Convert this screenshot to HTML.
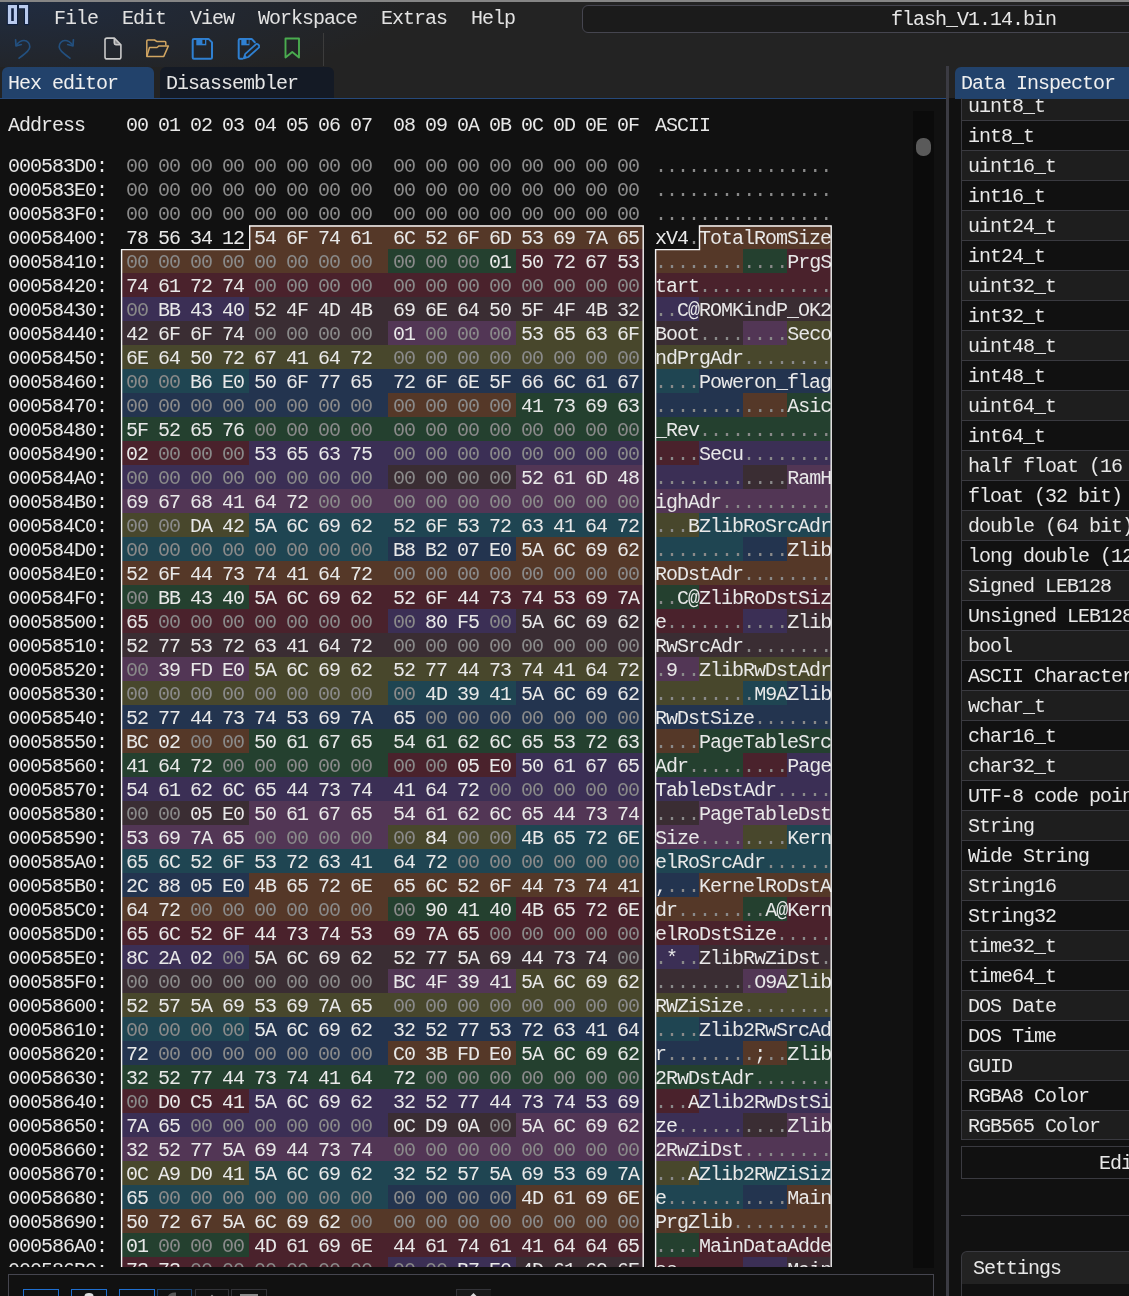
<!DOCTYPE html><html><head><meta charset="utf-8"><style>
*{margin:0;padding:0;box-sizing:border-box}
html,body{width:1129px;height:1296px;overflow:hidden;background:#111111}
body{position:relative;font-family:"Liberation Mono",monospace;font-size:20px;letter-spacing:-1px;color:#e8e8e8}
.a{position:absolute}
.t{position:absolute;white-space:pre;line-height:24px}
.r{position:absolute;left:0;height:24px;width:935px}
.bg{position:absolute;top:0;height:24px}
.h{position:absolute;top:2px;width:32px;text-align:center;line-height:24px;white-space:pre}
.z{color:#8a8a8a}
.as{position:absolute;top:2px;left:655px;white-space:pre;line-height:24px}
.d{color:#8a8a8a}
.di{position:absolute;left:961px;width:200px;height:30px;border-top:1px solid #3a3a40}
.dt{position:absolute;left:968px;white-space:pre;line-height:30px;margin-top:2px}

</style></head><body><div id="root" style="position:absolute;left:0;top:0;width:1129px;height:1296px;will-change:transform">
<div class="a" style="left:0;top:0;width:1129px;height:67px;background:#232323"></div>
<div class="a" style="left:0;top:0;width:700px;height:67px;background:radial-gradient(ellipse 420px 90px at 0px 0px, rgba(30,52,90,0.55), rgba(30,52,90,0) 100%)"></div>
<div class="a" style="left:0;top:0;width:1129px;height:2px;background:#858585"></div>
<svg class="a" style="left:4px;top:2px" width="30" height="26" viewBox="0 0 30 26"><g fill="#0f1f3e"><rect x="2.9" y="1.9" width="11.1" height="21.2"/><rect x="14" y="1.9" width="11.1" height="5.35"/><rect x="20" y="1.9" width="5.1" height="21.2"/></g><path d="M3.9 2.9h9.1v19.2h-9.1z M7.2 6.25v12.65h2.6v-12.65z" fill="#b9caed" fill-rule="evenodd"/><path d="M15 2.9h9.1v19.2h-3.1v-15.85h-6z" fill="#b9caed"/></svg>
<div class="t" style="left:54px;top:7px;color:#e2e2e2">File</div>
<div class="t" style="left:122px;top:7px;color:#e2e2e2">Edit</div>
<div class="t" style="left:190px;top:7px;color:#e2e2e2">View</div>
<div class="t" style="left:258px;top:7px;color:#e2e2e2">Workspace</div>
<div class="t" style="left:381px;top:7px;color:#e2e2e2">Extras</div>
<div class="t" style="left:471px;top:7px;color:#e2e2e2">Help</div>
<div class="a" style="left:582px;top:5px;width:600px;height:28px;border:1px solid #45454f;border-radius:6px;background:#1b1b1b"></div>
<div class="t" style="left:891px;top:8px;color:#e6e6e6">flash_V1.14.bin</div>
<svg class="a" style="left:0;top:32px" width="330" height="34" viewBox="0 0 330 34"><g fill="none" stroke="#23507f" stroke-width="1.7" stroke-linecap="round" stroke-linejoin="round"><path d="M16.5 13 C19 9.5 22 8.5 24 8.5 C27.5 8.5 30 11.5 29.8 15 C29.6 18 27 20 19.1 26.2"/><path d="M15.6 7.8 L16 13.9 L21.3 12.5"/><path d="M72.5 13 C70 9.5 67 8.5 65 8.5 C61.5 8.5 59 11.5 59.2 15 C59.4 18 62 20 69.9 26.2"/><path d="M73.4 7.8 L73 13.9 L67.7 12.5"/></g><g fill="none" stroke="#c9c9c9" stroke-width="1.6" stroke-linejoin="round"><path d="M107 6.1 H114.3 L120.9 12.7 V24.9 Q120.9 26.9 118.9 26.9 H107 Q105 26.9 105 24.9 V8.1 Q105 6.1 107 6.1 Z"/><path d="M114.3 6.1 V11.1 Q114.3 12.7 115.9 12.7 H120.9"/></g><path d="M115 7 L120 12 H115z" fill="#cfcfcf" opacity="0.6"/><g fill="none" stroke="#d2a662" stroke-width="1.5" stroke-linejoin="round"><path d="M146.8 24.6 V9 Q146.8 8 147.8 8 H154.5 L157.1 9.6 H164.8 Q165.8 9.6 165.8 10.6 V13.5"/><path d="M146.8 24.6 L149.5 15.5 H157 L159 13.9 H168.4 L163.8 24.4 Z"/></g><path d="M194 6.9 H208.5 L212 10.4 V25.5 Q212 26.8 210.7 26.8 H194 Q192.7 26.8 192.7 25.5 V8.2 Q192.7 6.9 194 6.9 Z" fill="none" stroke="#2f80d2" stroke-width="2" stroke-linejoin="round"/><rect x="196.3" y="7" width="10" height="6.3" fill="#2f80d2"/><rect x="202.4" y="7.9" width="2.6" height="3.9" fill="#232323"/><path d="M242.4 26.8 H240 Q238.7 26.8 238.7 25.5 V8.2 Q238.7 6.9 240 6.9 H251.6 L254.8 10.2" fill="none" stroke="#2f80d2" stroke-width="2" stroke-linejoin="round" stroke-linecap="round"/><rect x="241.3" y="7" width="8.2" height="6.3" fill="#2f80d2"/><rect x="246.6" y="7.9" width="2.1" height="3.9" fill="#232323"/><path d="M243.8 26.3 L248.3 25 L259.1 15.3 Q259.6 13.3 258 12.4 Q257 11.6 256.1 12.1 L245.3 21.8 Z" fill="none" stroke="#2f80d2" stroke-width="1.8" stroke-linejoin="round"/><path d="M243.8 26.3 L247 25.3 L245.2 23z" fill="#2f80d2"/><path d="M285.5 6.5h13.5v19l-6.75-5.5-6.75 5.5z" fill="none" stroke="#4aac4f" stroke-width="1.9" stroke-linejoin="round"/><rect x="323" y="1" width="1" height="33" fill="#3c3c3c"/></svg>
<div class="a" style="left:0;top:67px;width:946px;height:31px;background:#232323"></div>
<div class="a" style="left:2px;top:67px;width:152px;height:31px;background:#22426b;border-radius:6px 6px 0 0"></div>
<div class="a" style="left:160px;top:67px;width:174px;height:31px;background:#141a25;border-radius:6px 6px 0 0"></div>
<div class="a" style="left:0;top:98px;width:946px;height:1px;background:#26497a"></div>
<div class="t" style="left:8px;top:72px;color:#f0f0f0">Hex editor</div>
<div class="t" style="left:166px;top:72px;color:#e6e6e6">Disassembler</div>
<div class="t" style="left:8px;top:114px">Address</div>
<div class="h" style="left:121px;top:114px">00</div>
<div class="h" style="left:153px;top:114px">01</div>
<div class="h" style="left:185px;top:114px">02</div>
<div class="h" style="left:217px;top:114px">03</div>
<div class="h" style="left:249px;top:114px">04</div>
<div class="h" style="left:281px;top:114px">05</div>
<div class="h" style="left:313px;top:114px">06</div>
<div class="h" style="left:345px;top:114px">07</div>
<div class="h" style="left:388px;top:114px">08</div>
<div class="h" style="left:420px;top:114px">09</div>
<div class="h" style="left:452px;top:114px">0A</div>
<div class="h" style="left:484px;top:114px">0B</div>
<div class="h" style="left:516px;top:114px">0C</div>
<div class="h" style="left:548px;top:114px">0D</div>
<div class="h" style="left:580px;top:114px">0E</div>
<div class="h" style="left:612px;top:114px">0F</div>
<div class="t" style="left:655px;top:114px">ASCII</div>
<div class="a" style="left:0;top:153px;width:935px;height:1114px;overflow:hidden">
<div class="r" style="top:0px">
<div class="t" style="left:8px;top:2px">000583D0:</div>
<div class="h z" style="left:121px">00</div>
<div class="h z" style="left:153px">00</div>
<div class="h z" style="left:185px">00</div>
<div class="h z" style="left:217px">00</div>
<div class="h z" style="left:249px">00</div>
<div class="h z" style="left:281px">00</div>
<div class="h z" style="left:313px">00</div>
<div class="h z" style="left:345px">00</div>
<div class="h z" style="left:388px">00</div>
<div class="h z" style="left:420px">00</div>
<div class="h z" style="left:452px">00</div>
<div class="h z" style="left:484px">00</div>
<div class="h z" style="left:516px">00</div>
<div class="h z" style="left:548px">00</div>
<div class="h z" style="left:580px">00</div>
<div class="h z" style="left:612px">00</div>
<div class="as"><span class="d">.</span><span class="d">.</span><span class="d">.</span><span class="d">.</span><span class="d">.</span><span class="d">.</span><span class="d">.</span><span class="d">.</span><span class="d">.</span><span class="d">.</span><span class="d">.</span><span class="d">.</span><span class="d">.</span><span class="d">.</span><span class="d">.</span><span class="d">.</span></div>
</div>
<div class="r" style="top:24px">
<div class="t" style="left:8px;top:2px">000583E0:</div>
<div class="h z" style="left:121px">00</div>
<div class="h z" style="left:153px">00</div>
<div class="h z" style="left:185px">00</div>
<div class="h z" style="left:217px">00</div>
<div class="h z" style="left:249px">00</div>
<div class="h z" style="left:281px">00</div>
<div class="h z" style="left:313px">00</div>
<div class="h z" style="left:345px">00</div>
<div class="h z" style="left:388px">00</div>
<div class="h z" style="left:420px">00</div>
<div class="h z" style="left:452px">00</div>
<div class="h z" style="left:484px">00</div>
<div class="h z" style="left:516px">00</div>
<div class="h z" style="left:548px">00</div>
<div class="h z" style="left:580px">00</div>
<div class="h z" style="left:612px">00</div>
<div class="as"><span class="d">.</span><span class="d">.</span><span class="d">.</span><span class="d">.</span><span class="d">.</span><span class="d">.</span><span class="d">.</span><span class="d">.</span><span class="d">.</span><span class="d">.</span><span class="d">.</span><span class="d">.</span><span class="d">.</span><span class="d">.</span><span class="d">.</span><span class="d">.</span></div>
</div>
<div class="r" style="top:48px">
<div class="t" style="left:8px;top:2px">000583F0:</div>
<div class="h z" style="left:121px">00</div>
<div class="h z" style="left:153px">00</div>
<div class="h z" style="left:185px">00</div>
<div class="h z" style="left:217px">00</div>
<div class="h z" style="left:249px">00</div>
<div class="h z" style="left:281px">00</div>
<div class="h z" style="left:313px">00</div>
<div class="h z" style="left:345px">00</div>
<div class="h z" style="left:388px">00</div>
<div class="h z" style="left:420px">00</div>
<div class="h z" style="left:452px">00</div>
<div class="h z" style="left:484px">00</div>
<div class="h z" style="left:516px">00</div>
<div class="h z" style="left:548px">00</div>
<div class="h z" style="left:580px">00</div>
<div class="h z" style="left:612px">00</div>
<div class="as"><span class="d">.</span><span class="d">.</span><span class="d">.</span><span class="d">.</span><span class="d">.</span><span class="d">.</span><span class="d">.</span><span class="d">.</span><span class="d">.</span><span class="d">.</span><span class="d">.</span><span class="d">.</span><span class="d">.</span><span class="d">.</span><span class="d">.</span><span class="d">.</span></div>
</div>
<div class="r" style="top:72px">
<div class="t" style="left:8px;top:2px">00058400:</div>
<div class="bg" style="left:249px;width:395px;background:#553828"></div>
<div class="bg" style="left:699px;width:132px;background:#553828"></div>
<div class="h" style="left:121px">78</div>
<div class="h" style="left:153px">56</div>
<div class="h" style="left:185px">34</div>
<div class="h" style="left:217px">12</div>
<div class="h" style="left:249px">54</div>
<div class="h" style="left:281px">6F</div>
<div class="h" style="left:313px">74</div>
<div class="h" style="left:345px">61</div>
<div class="h" style="left:388px">6C</div>
<div class="h" style="left:420px">52</div>
<div class="h" style="left:452px">6F</div>
<div class="h" style="left:484px">6D</div>
<div class="h" style="left:516px">53</div>
<div class="h" style="left:548px">69</div>
<div class="h" style="left:580px">7A</div>
<div class="h" style="left:612px">65</div>
<div class="as">xV4<span class="d">.</span>TotalRomSize</div>
</div>
<div class="r" style="top:96px">
<div class="t" style="left:8px;top:2px">00058410:</div>
<div class="bg" style="left:121px;width:267px;background:#553828"></div>
<div class="bg" style="left:388px;width:128px;background:#24402f"></div>
<div class="bg" style="left:516px;width:128px;background:#4a222c"></div>
<div class="bg" style="left:655px;width:88px;background:#553828"></div>
<div class="bg" style="left:743px;width:44px;background:#24402f"></div>
<div class="bg" style="left:787px;width:44px;background:#4a222c"></div>
<div class="h z" style="left:121px">00</div>
<div class="h z" style="left:153px">00</div>
<div class="h z" style="left:185px">00</div>
<div class="h z" style="left:217px">00</div>
<div class="h z" style="left:249px">00</div>
<div class="h z" style="left:281px">00</div>
<div class="h z" style="left:313px">00</div>
<div class="h z" style="left:345px">00</div>
<div class="h z" style="left:388px">00</div>
<div class="h z" style="left:420px">00</div>
<div class="h z" style="left:452px">00</div>
<div class="h" style="left:484px">01</div>
<div class="h" style="left:516px">50</div>
<div class="h" style="left:548px">72</div>
<div class="h" style="left:580px">67</div>
<div class="h" style="left:612px">53</div>
<div class="as"><span class="d">.</span><span class="d">.</span><span class="d">.</span><span class="d">.</span><span class="d">.</span><span class="d">.</span><span class="d">.</span><span class="d">.</span><span class="d">.</span><span class="d">.</span><span class="d">.</span><span class="d">.</span>PrgS</div>
</div>
<div class="r" style="top:120px">
<div class="t" style="left:8px;top:2px">00058420:</div>
<div class="bg" style="left:121px;width:523px;background:#4a222c"></div>
<div class="bg" style="left:655px;width:176px;background:#4a222c"></div>
<div class="h" style="left:121px">74</div>
<div class="h" style="left:153px">61</div>
<div class="h" style="left:185px">72</div>
<div class="h" style="left:217px">74</div>
<div class="h z" style="left:249px">00</div>
<div class="h z" style="left:281px">00</div>
<div class="h z" style="left:313px">00</div>
<div class="h z" style="left:345px">00</div>
<div class="h z" style="left:388px">00</div>
<div class="h z" style="left:420px">00</div>
<div class="h z" style="left:452px">00</div>
<div class="h z" style="left:484px">00</div>
<div class="h z" style="left:516px">00</div>
<div class="h z" style="left:548px">00</div>
<div class="h z" style="left:580px">00</div>
<div class="h z" style="left:612px">00</div>
<div class="as">tart<span class="d">.</span><span class="d">.</span><span class="d">.</span><span class="d">.</span><span class="d">.</span><span class="d">.</span><span class="d">.</span><span class="d">.</span><span class="d">.</span><span class="d">.</span><span class="d">.</span><span class="d">.</span></div>
</div>
<div class="r" style="top:144px">
<div class="t" style="left:8px;top:2px">00058430:</div>
<div class="bg" style="left:121px;width:128px;background:#3b2f55"></div>
<div class="bg" style="left:249px;width:395px;background:#3a2d33"></div>
<div class="bg" style="left:655px;width:44px;background:#3b2f55"></div>
<div class="bg" style="left:699px;width:132px;background:#3a2d33"></div>
<div class="h z" style="left:121px">00</div>
<div class="h" style="left:153px">BB</div>
<div class="h" style="left:185px">43</div>
<div class="h" style="left:217px">40</div>
<div class="h" style="left:249px">52</div>
<div class="h" style="left:281px">4F</div>
<div class="h" style="left:313px">4D</div>
<div class="h" style="left:345px">4B</div>
<div class="h" style="left:388px">69</div>
<div class="h" style="left:420px">6E</div>
<div class="h" style="left:452px">64</div>
<div class="h" style="left:484px">50</div>
<div class="h" style="left:516px">5F</div>
<div class="h" style="left:548px">4F</div>
<div class="h" style="left:580px">4B</div>
<div class="h" style="left:612px">32</div>
<div class="as"><span class="d">.</span><span class="d">.</span>C@ROMKindP_OK2</div>
</div>
<div class="r" style="top:168px">
<div class="t" style="left:8px;top:2px">00058440:</div>
<div class="bg" style="left:121px;width:267px;background:#3a2d33"></div>
<div class="bg" style="left:388px;width:128px;background:#523655"></div>
<div class="bg" style="left:516px;width:128px;background:#48472c"></div>
<div class="bg" style="left:655px;width:88px;background:#3a2d33"></div>
<div class="bg" style="left:743px;width:44px;background:#523655"></div>
<div class="bg" style="left:787px;width:44px;background:#48472c"></div>
<div class="h" style="left:121px">42</div>
<div class="h" style="left:153px">6F</div>
<div class="h" style="left:185px">6F</div>
<div class="h" style="left:217px">74</div>
<div class="h z" style="left:249px">00</div>
<div class="h z" style="left:281px">00</div>
<div class="h z" style="left:313px">00</div>
<div class="h z" style="left:345px">00</div>
<div class="h" style="left:388px">01</div>
<div class="h z" style="left:420px">00</div>
<div class="h z" style="left:452px">00</div>
<div class="h z" style="left:484px">00</div>
<div class="h" style="left:516px">53</div>
<div class="h" style="left:548px">65</div>
<div class="h" style="left:580px">63</div>
<div class="h" style="left:612px">6F</div>
<div class="as">Boot<span class="d">.</span><span class="d">.</span><span class="d">.</span><span class="d">.</span><span class="d">.</span><span class="d">.</span><span class="d">.</span><span class="d">.</span>Seco</div>
</div>
<div class="r" style="top:192px">
<div class="t" style="left:8px;top:2px">00058450:</div>
<div class="bg" style="left:121px;width:523px;background:#48472c"></div>
<div class="bg" style="left:655px;width:176px;background:#48472c"></div>
<div class="h" style="left:121px">6E</div>
<div class="h" style="left:153px">64</div>
<div class="h" style="left:185px">50</div>
<div class="h" style="left:217px">72</div>
<div class="h" style="left:249px">67</div>
<div class="h" style="left:281px">41</div>
<div class="h" style="left:313px">64</div>
<div class="h" style="left:345px">72</div>
<div class="h z" style="left:388px">00</div>
<div class="h z" style="left:420px">00</div>
<div class="h z" style="left:452px">00</div>
<div class="h z" style="left:484px">00</div>
<div class="h z" style="left:516px">00</div>
<div class="h z" style="left:548px">00</div>
<div class="h z" style="left:580px">00</div>
<div class="h z" style="left:612px">00</div>
<div class="as">ndPrgAdr<span class="d">.</span><span class="d">.</span><span class="d">.</span><span class="d">.</span><span class="d">.</span><span class="d">.</span><span class="d">.</span><span class="d">.</span></div>
</div>
<div class="r" style="top:216px">
<div class="t" style="left:8px;top:2px">00058460:</div>
<div class="bg" style="left:121px;width:128px;background:#1f4552"></div>
<div class="bg" style="left:249px;width:395px;background:#23344f"></div>
<div class="bg" style="left:655px;width:44px;background:#1f4552"></div>
<div class="bg" style="left:699px;width:132px;background:#23344f"></div>
<div class="h z" style="left:121px">00</div>
<div class="h z" style="left:153px">00</div>
<div class="h" style="left:185px">B6</div>
<div class="h" style="left:217px">E0</div>
<div class="h" style="left:249px">50</div>
<div class="h" style="left:281px">6F</div>
<div class="h" style="left:313px">77</div>
<div class="h" style="left:345px">65</div>
<div class="h" style="left:388px">72</div>
<div class="h" style="left:420px">6F</div>
<div class="h" style="left:452px">6E</div>
<div class="h" style="left:484px">5F</div>
<div class="h" style="left:516px">66</div>
<div class="h" style="left:548px">6C</div>
<div class="h" style="left:580px">61</div>
<div class="h" style="left:612px">67</div>
<div class="as"><span class="d">.</span><span class="d">.</span><span class="d">.</span><span class="d">.</span>Poweron_flag</div>
</div>
<div class="r" style="top:240px">
<div class="t" style="left:8px;top:2px">00058470:</div>
<div class="bg" style="left:121px;width:267px;background:#23344f"></div>
<div class="bg" style="left:388px;width:128px;background:#553828"></div>
<div class="bg" style="left:516px;width:128px;background:#24402f"></div>
<div class="bg" style="left:655px;width:88px;background:#23344f"></div>
<div class="bg" style="left:743px;width:44px;background:#553828"></div>
<div class="bg" style="left:787px;width:44px;background:#24402f"></div>
<div class="h z" style="left:121px">00</div>
<div class="h z" style="left:153px">00</div>
<div class="h z" style="left:185px">00</div>
<div class="h z" style="left:217px">00</div>
<div class="h z" style="left:249px">00</div>
<div class="h z" style="left:281px">00</div>
<div class="h z" style="left:313px">00</div>
<div class="h z" style="left:345px">00</div>
<div class="h z" style="left:388px">00</div>
<div class="h z" style="left:420px">00</div>
<div class="h z" style="left:452px">00</div>
<div class="h z" style="left:484px">00</div>
<div class="h" style="left:516px">41</div>
<div class="h" style="left:548px">73</div>
<div class="h" style="left:580px">69</div>
<div class="h" style="left:612px">63</div>
<div class="as"><span class="d">.</span><span class="d">.</span><span class="d">.</span><span class="d">.</span><span class="d">.</span><span class="d">.</span><span class="d">.</span><span class="d">.</span><span class="d">.</span><span class="d">.</span><span class="d">.</span><span class="d">.</span>Asic</div>
</div>
<div class="r" style="top:264px">
<div class="t" style="left:8px;top:2px">00058480:</div>
<div class="bg" style="left:121px;width:523px;background:#24402f"></div>
<div class="bg" style="left:655px;width:176px;background:#24402f"></div>
<div class="h" style="left:121px">5F</div>
<div class="h" style="left:153px">52</div>
<div class="h" style="left:185px">65</div>
<div class="h" style="left:217px">76</div>
<div class="h z" style="left:249px">00</div>
<div class="h z" style="left:281px">00</div>
<div class="h z" style="left:313px">00</div>
<div class="h z" style="left:345px">00</div>
<div class="h z" style="left:388px">00</div>
<div class="h z" style="left:420px">00</div>
<div class="h z" style="left:452px">00</div>
<div class="h z" style="left:484px">00</div>
<div class="h z" style="left:516px">00</div>
<div class="h z" style="left:548px">00</div>
<div class="h z" style="left:580px">00</div>
<div class="h z" style="left:612px">00</div>
<div class="as">_Rev<span class="d">.</span><span class="d">.</span><span class="d">.</span><span class="d">.</span><span class="d">.</span><span class="d">.</span><span class="d">.</span><span class="d">.</span><span class="d">.</span><span class="d">.</span><span class="d">.</span><span class="d">.</span></div>
</div>
<div class="r" style="top:288px">
<div class="t" style="left:8px;top:2px">00058490:</div>
<div class="bg" style="left:121px;width:128px;background:#4a222c"></div>
<div class="bg" style="left:249px;width:395px;background:#3b2f55"></div>
<div class="bg" style="left:655px;width:44px;background:#4a222c"></div>
<div class="bg" style="left:699px;width:132px;background:#3b2f55"></div>
<div class="h" style="left:121px">02</div>
<div class="h z" style="left:153px">00</div>
<div class="h z" style="left:185px">00</div>
<div class="h z" style="left:217px">00</div>
<div class="h" style="left:249px">53</div>
<div class="h" style="left:281px">65</div>
<div class="h" style="left:313px">63</div>
<div class="h" style="left:345px">75</div>
<div class="h z" style="left:388px">00</div>
<div class="h z" style="left:420px">00</div>
<div class="h z" style="left:452px">00</div>
<div class="h z" style="left:484px">00</div>
<div class="h z" style="left:516px">00</div>
<div class="h z" style="left:548px">00</div>
<div class="h z" style="left:580px">00</div>
<div class="h z" style="left:612px">00</div>
<div class="as"><span class="d">.</span><span class="d">.</span><span class="d">.</span><span class="d">.</span>Secu<span class="d">.</span><span class="d">.</span><span class="d">.</span><span class="d">.</span><span class="d">.</span><span class="d">.</span><span class="d">.</span><span class="d">.</span></div>
</div>
<div class="r" style="top:312px">
<div class="t" style="left:8px;top:2px">000584A0:</div>
<div class="bg" style="left:121px;width:267px;background:#3b2f55"></div>
<div class="bg" style="left:388px;width:128px;background:#3a2d33"></div>
<div class="bg" style="left:516px;width:128px;background:#523655"></div>
<div class="bg" style="left:655px;width:88px;background:#3b2f55"></div>
<div class="bg" style="left:743px;width:44px;background:#3a2d33"></div>
<div class="bg" style="left:787px;width:44px;background:#523655"></div>
<div class="h z" style="left:121px">00</div>
<div class="h z" style="left:153px">00</div>
<div class="h z" style="left:185px">00</div>
<div class="h z" style="left:217px">00</div>
<div class="h z" style="left:249px">00</div>
<div class="h z" style="left:281px">00</div>
<div class="h z" style="left:313px">00</div>
<div class="h z" style="left:345px">00</div>
<div class="h z" style="left:388px">00</div>
<div class="h z" style="left:420px">00</div>
<div class="h z" style="left:452px">00</div>
<div class="h z" style="left:484px">00</div>
<div class="h" style="left:516px">52</div>
<div class="h" style="left:548px">61</div>
<div class="h" style="left:580px">6D</div>
<div class="h" style="left:612px">48</div>
<div class="as"><span class="d">.</span><span class="d">.</span><span class="d">.</span><span class="d">.</span><span class="d">.</span><span class="d">.</span><span class="d">.</span><span class="d">.</span><span class="d">.</span><span class="d">.</span><span class="d">.</span><span class="d">.</span>RamH</div>
</div>
<div class="r" style="top:336px">
<div class="t" style="left:8px;top:2px">000584B0:</div>
<div class="bg" style="left:121px;width:523px;background:#523655"></div>
<div class="bg" style="left:655px;width:176px;background:#523655"></div>
<div class="h" style="left:121px">69</div>
<div class="h" style="left:153px">67</div>
<div class="h" style="left:185px">68</div>
<div class="h" style="left:217px">41</div>
<div class="h" style="left:249px">64</div>
<div class="h" style="left:281px">72</div>
<div class="h z" style="left:313px">00</div>
<div class="h z" style="left:345px">00</div>
<div class="h z" style="left:388px">00</div>
<div class="h z" style="left:420px">00</div>
<div class="h z" style="left:452px">00</div>
<div class="h z" style="left:484px">00</div>
<div class="h z" style="left:516px">00</div>
<div class="h z" style="left:548px">00</div>
<div class="h z" style="left:580px">00</div>
<div class="h z" style="left:612px">00</div>
<div class="as">ighAdr<span class="d">.</span><span class="d">.</span><span class="d">.</span><span class="d">.</span><span class="d">.</span><span class="d">.</span><span class="d">.</span><span class="d">.</span><span class="d">.</span><span class="d">.</span></div>
</div>
<div class="r" style="top:360px">
<div class="t" style="left:8px;top:2px">000584C0:</div>
<div class="bg" style="left:121px;width:128px;background:#48472c"></div>
<div class="bg" style="left:249px;width:395px;background:#1f4552"></div>
<div class="bg" style="left:655px;width:44px;background:#48472c"></div>
<div class="bg" style="left:699px;width:132px;background:#1f4552"></div>
<div class="h z" style="left:121px">00</div>
<div class="h z" style="left:153px">00</div>
<div class="h" style="left:185px">DA</div>
<div class="h" style="left:217px">42</div>
<div class="h" style="left:249px">5A</div>
<div class="h" style="left:281px">6C</div>
<div class="h" style="left:313px">69</div>
<div class="h" style="left:345px">62</div>
<div class="h" style="left:388px">52</div>
<div class="h" style="left:420px">6F</div>
<div class="h" style="left:452px">53</div>
<div class="h" style="left:484px">72</div>
<div class="h" style="left:516px">63</div>
<div class="h" style="left:548px">41</div>
<div class="h" style="left:580px">64</div>
<div class="h" style="left:612px">72</div>
<div class="as"><span class="d">.</span><span class="d">.</span><span class="d">.</span>BZlibRoSrcAdr</div>
</div>
<div class="r" style="top:384px">
<div class="t" style="left:8px;top:2px">000584D0:</div>
<div class="bg" style="left:121px;width:267px;background:#1f4552"></div>
<div class="bg" style="left:388px;width:128px;background:#23344f"></div>
<div class="bg" style="left:516px;width:128px;background:#553828"></div>
<div class="bg" style="left:655px;width:88px;background:#1f4552"></div>
<div class="bg" style="left:743px;width:44px;background:#23344f"></div>
<div class="bg" style="left:787px;width:44px;background:#553828"></div>
<div class="h z" style="left:121px">00</div>
<div class="h z" style="left:153px">00</div>
<div class="h z" style="left:185px">00</div>
<div class="h z" style="left:217px">00</div>
<div class="h z" style="left:249px">00</div>
<div class="h z" style="left:281px">00</div>
<div class="h z" style="left:313px">00</div>
<div class="h z" style="left:345px">00</div>
<div class="h" style="left:388px">B8</div>
<div class="h" style="left:420px">B2</div>
<div class="h" style="left:452px">07</div>
<div class="h" style="left:484px">E0</div>
<div class="h" style="left:516px">5A</div>
<div class="h" style="left:548px">6C</div>
<div class="h" style="left:580px">69</div>
<div class="h" style="left:612px">62</div>
<div class="as"><span class="d">.</span><span class="d">.</span><span class="d">.</span><span class="d">.</span><span class="d">.</span><span class="d">.</span><span class="d">.</span><span class="d">.</span><span class="d">.</span><span class="d">.</span><span class="d">.</span><span class="d">.</span>Zlib</div>
</div>
<div class="r" style="top:408px">
<div class="t" style="left:8px;top:2px">000584E0:</div>
<div class="bg" style="left:121px;width:523px;background:#553828"></div>
<div class="bg" style="left:655px;width:176px;background:#553828"></div>
<div class="h" style="left:121px">52</div>
<div class="h" style="left:153px">6F</div>
<div class="h" style="left:185px">44</div>
<div class="h" style="left:217px">73</div>
<div class="h" style="left:249px">74</div>
<div class="h" style="left:281px">41</div>
<div class="h" style="left:313px">64</div>
<div class="h" style="left:345px">72</div>
<div class="h z" style="left:388px">00</div>
<div class="h z" style="left:420px">00</div>
<div class="h z" style="left:452px">00</div>
<div class="h z" style="left:484px">00</div>
<div class="h z" style="left:516px">00</div>
<div class="h z" style="left:548px">00</div>
<div class="h z" style="left:580px">00</div>
<div class="h z" style="left:612px">00</div>
<div class="as">RoDstAdr<span class="d">.</span><span class="d">.</span><span class="d">.</span><span class="d">.</span><span class="d">.</span><span class="d">.</span><span class="d">.</span><span class="d">.</span></div>
</div>
<div class="r" style="top:432px">
<div class="t" style="left:8px;top:2px">000584F0:</div>
<div class="bg" style="left:121px;width:128px;background:#24402f"></div>
<div class="bg" style="left:249px;width:395px;background:#4a222c"></div>
<div class="bg" style="left:655px;width:44px;background:#24402f"></div>
<div class="bg" style="left:699px;width:132px;background:#4a222c"></div>
<div class="h z" style="left:121px">00</div>
<div class="h" style="left:153px">BB</div>
<div class="h" style="left:185px">43</div>
<div class="h" style="left:217px">40</div>
<div class="h" style="left:249px">5A</div>
<div class="h" style="left:281px">6C</div>
<div class="h" style="left:313px">69</div>
<div class="h" style="left:345px">62</div>
<div class="h" style="left:388px">52</div>
<div class="h" style="left:420px">6F</div>
<div class="h" style="left:452px">44</div>
<div class="h" style="left:484px">73</div>
<div class="h" style="left:516px">74</div>
<div class="h" style="left:548px">53</div>
<div class="h" style="left:580px">69</div>
<div class="h" style="left:612px">7A</div>
<div class="as"><span class="d">.</span><span class="d">.</span>C@ZlibRoDstSiz</div>
</div>
<div class="r" style="top:456px">
<div class="t" style="left:8px;top:2px">00058500:</div>
<div class="bg" style="left:121px;width:267px;background:#4a222c"></div>
<div class="bg" style="left:388px;width:128px;background:#3b2f55"></div>
<div class="bg" style="left:516px;width:128px;background:#3a2d33"></div>
<div class="bg" style="left:655px;width:88px;background:#4a222c"></div>
<div class="bg" style="left:743px;width:44px;background:#3b2f55"></div>
<div class="bg" style="left:787px;width:44px;background:#3a2d33"></div>
<div class="h" style="left:121px">65</div>
<div class="h z" style="left:153px">00</div>
<div class="h z" style="left:185px">00</div>
<div class="h z" style="left:217px">00</div>
<div class="h z" style="left:249px">00</div>
<div class="h z" style="left:281px">00</div>
<div class="h z" style="left:313px">00</div>
<div class="h z" style="left:345px">00</div>
<div class="h z" style="left:388px">00</div>
<div class="h" style="left:420px">80</div>
<div class="h" style="left:452px">F5</div>
<div class="h z" style="left:484px">00</div>
<div class="h" style="left:516px">5A</div>
<div class="h" style="left:548px">6C</div>
<div class="h" style="left:580px">69</div>
<div class="h" style="left:612px">62</div>
<div class="as">e<span class="d">.</span><span class="d">.</span><span class="d">.</span><span class="d">.</span><span class="d">.</span><span class="d">.</span><span class="d">.</span><span class="d">.</span><span class="d">.</span><span class="d">.</span><span class="d">.</span>Zlib</div>
</div>
<div class="r" style="top:480px">
<div class="t" style="left:8px;top:2px">00058510:</div>
<div class="bg" style="left:121px;width:523px;background:#3a2d33"></div>
<div class="bg" style="left:655px;width:176px;background:#3a2d33"></div>
<div class="h" style="left:121px">52</div>
<div class="h" style="left:153px">77</div>
<div class="h" style="left:185px">53</div>
<div class="h" style="left:217px">72</div>
<div class="h" style="left:249px">63</div>
<div class="h" style="left:281px">41</div>
<div class="h" style="left:313px">64</div>
<div class="h" style="left:345px">72</div>
<div class="h z" style="left:388px">00</div>
<div class="h z" style="left:420px">00</div>
<div class="h z" style="left:452px">00</div>
<div class="h z" style="left:484px">00</div>
<div class="h z" style="left:516px">00</div>
<div class="h z" style="left:548px">00</div>
<div class="h z" style="left:580px">00</div>
<div class="h z" style="left:612px">00</div>
<div class="as">RwSrcAdr<span class="d">.</span><span class="d">.</span><span class="d">.</span><span class="d">.</span><span class="d">.</span><span class="d">.</span><span class="d">.</span><span class="d">.</span></div>
</div>
<div class="r" style="top:504px">
<div class="t" style="left:8px;top:2px">00058520:</div>
<div class="bg" style="left:121px;width:128px;background:#523655"></div>
<div class="bg" style="left:249px;width:395px;background:#48472c"></div>
<div class="bg" style="left:655px;width:44px;background:#523655"></div>
<div class="bg" style="left:699px;width:132px;background:#48472c"></div>
<div class="h z" style="left:121px">00</div>
<div class="h" style="left:153px">39</div>
<div class="h" style="left:185px">FD</div>
<div class="h" style="left:217px">E0</div>
<div class="h" style="left:249px">5A</div>
<div class="h" style="left:281px">6C</div>
<div class="h" style="left:313px">69</div>
<div class="h" style="left:345px">62</div>
<div class="h" style="left:388px">52</div>
<div class="h" style="left:420px">77</div>
<div class="h" style="left:452px">44</div>
<div class="h" style="left:484px">73</div>
<div class="h" style="left:516px">74</div>
<div class="h" style="left:548px">41</div>
<div class="h" style="left:580px">64</div>
<div class="h" style="left:612px">72</div>
<div class="as"><span class="d">.</span>9<span class="d">.</span><span class="d">.</span>ZlibRwDstAdr</div>
</div>
<div class="r" style="top:528px">
<div class="t" style="left:8px;top:2px">00058530:</div>
<div class="bg" style="left:121px;width:267px;background:#48472c"></div>
<div class="bg" style="left:388px;width:128px;background:#1f4552"></div>
<div class="bg" style="left:516px;width:128px;background:#23344f"></div>
<div class="bg" style="left:655px;width:88px;background:#48472c"></div>
<div class="bg" style="left:743px;width:44px;background:#1f4552"></div>
<div class="bg" style="left:787px;width:44px;background:#23344f"></div>
<div class="h z" style="left:121px">00</div>
<div class="h z" style="left:153px">00</div>
<div class="h z" style="left:185px">00</div>
<div class="h z" style="left:217px">00</div>
<div class="h z" style="left:249px">00</div>
<div class="h z" style="left:281px">00</div>
<div class="h z" style="left:313px">00</div>
<div class="h z" style="left:345px">00</div>
<div class="h z" style="left:388px">00</div>
<div class="h" style="left:420px">4D</div>
<div class="h" style="left:452px">39</div>
<div class="h" style="left:484px">41</div>
<div class="h" style="left:516px">5A</div>
<div class="h" style="left:548px">6C</div>
<div class="h" style="left:580px">69</div>
<div class="h" style="left:612px">62</div>
<div class="as"><span class="d">.</span><span class="d">.</span><span class="d">.</span><span class="d">.</span><span class="d">.</span><span class="d">.</span><span class="d">.</span><span class="d">.</span><span class="d">.</span>M9AZlib</div>
</div>
<div class="r" style="top:552px">
<div class="t" style="left:8px;top:2px">00058540:</div>
<div class="bg" style="left:121px;width:523px;background:#23344f"></div>
<div class="bg" style="left:655px;width:176px;background:#23344f"></div>
<div class="h" style="left:121px">52</div>
<div class="h" style="left:153px">77</div>
<div class="h" style="left:185px">44</div>
<div class="h" style="left:217px">73</div>
<div class="h" style="left:249px">74</div>
<div class="h" style="left:281px">53</div>
<div class="h" style="left:313px">69</div>
<div class="h" style="left:345px">7A</div>
<div class="h" style="left:388px">65</div>
<div class="h z" style="left:420px">00</div>
<div class="h z" style="left:452px">00</div>
<div class="h z" style="left:484px">00</div>
<div class="h z" style="left:516px">00</div>
<div class="h z" style="left:548px">00</div>
<div class="h z" style="left:580px">00</div>
<div class="h z" style="left:612px">00</div>
<div class="as">RwDstSize<span class="d">.</span><span class="d">.</span><span class="d">.</span><span class="d">.</span><span class="d">.</span><span class="d">.</span><span class="d">.</span></div>
</div>
<div class="r" style="top:576px">
<div class="t" style="left:8px;top:2px">00058550:</div>
<div class="bg" style="left:121px;width:128px;background:#553828"></div>
<div class="bg" style="left:249px;width:395px;background:#24402f"></div>
<div class="bg" style="left:655px;width:44px;background:#553828"></div>
<div class="bg" style="left:699px;width:132px;background:#24402f"></div>
<div class="h" style="left:121px">BC</div>
<div class="h" style="left:153px">02</div>
<div class="h z" style="left:185px">00</div>
<div class="h z" style="left:217px">00</div>
<div class="h" style="left:249px">50</div>
<div class="h" style="left:281px">61</div>
<div class="h" style="left:313px">67</div>
<div class="h" style="left:345px">65</div>
<div class="h" style="left:388px">54</div>
<div class="h" style="left:420px">61</div>
<div class="h" style="left:452px">62</div>
<div class="h" style="left:484px">6C</div>
<div class="h" style="left:516px">65</div>
<div class="h" style="left:548px">53</div>
<div class="h" style="left:580px">72</div>
<div class="h" style="left:612px">63</div>
<div class="as"><span class="d">.</span><span class="d">.</span><span class="d">.</span><span class="d">.</span>PageTableSrc</div>
</div>
<div class="r" style="top:600px">
<div class="t" style="left:8px;top:2px">00058560:</div>
<div class="bg" style="left:121px;width:267px;background:#24402f"></div>
<div class="bg" style="left:388px;width:128px;background:#4a222c"></div>
<div class="bg" style="left:516px;width:128px;background:#3b2f55"></div>
<div class="bg" style="left:655px;width:88px;background:#24402f"></div>
<div class="bg" style="left:743px;width:44px;background:#4a222c"></div>
<div class="bg" style="left:787px;width:44px;background:#3b2f55"></div>
<div class="h" style="left:121px">41</div>
<div class="h" style="left:153px">64</div>
<div class="h" style="left:185px">72</div>
<div class="h z" style="left:217px">00</div>
<div class="h z" style="left:249px">00</div>
<div class="h z" style="left:281px">00</div>
<div class="h z" style="left:313px">00</div>
<div class="h z" style="left:345px">00</div>
<div class="h z" style="left:388px">00</div>
<div class="h z" style="left:420px">00</div>
<div class="h" style="left:452px">05</div>
<div class="h" style="left:484px">E0</div>
<div class="h" style="left:516px">50</div>
<div class="h" style="left:548px">61</div>
<div class="h" style="left:580px">67</div>
<div class="h" style="left:612px">65</div>
<div class="as">Adr<span class="d">.</span><span class="d">.</span><span class="d">.</span><span class="d">.</span><span class="d">.</span><span class="d">.</span><span class="d">.</span><span class="d">.</span><span class="d">.</span>Page</div>
</div>
<div class="r" style="top:624px">
<div class="t" style="left:8px;top:2px">00058570:</div>
<div class="bg" style="left:121px;width:523px;background:#3b2f55"></div>
<div class="bg" style="left:655px;width:176px;background:#3b2f55"></div>
<div class="h" style="left:121px">54</div>
<div class="h" style="left:153px">61</div>
<div class="h" style="left:185px">62</div>
<div class="h" style="left:217px">6C</div>
<div class="h" style="left:249px">65</div>
<div class="h" style="left:281px">44</div>
<div class="h" style="left:313px">73</div>
<div class="h" style="left:345px">74</div>
<div class="h" style="left:388px">41</div>
<div class="h" style="left:420px">64</div>
<div class="h" style="left:452px">72</div>
<div class="h z" style="left:484px">00</div>
<div class="h z" style="left:516px">00</div>
<div class="h z" style="left:548px">00</div>
<div class="h z" style="left:580px">00</div>
<div class="h z" style="left:612px">00</div>
<div class="as">TableDstAdr<span class="d">.</span><span class="d">.</span><span class="d">.</span><span class="d">.</span><span class="d">.</span></div>
</div>
<div class="r" style="top:648px">
<div class="t" style="left:8px;top:2px">00058580:</div>
<div class="bg" style="left:121px;width:128px;background:#3a2d33"></div>
<div class="bg" style="left:249px;width:395px;background:#523655"></div>
<div class="bg" style="left:655px;width:44px;background:#3a2d33"></div>
<div class="bg" style="left:699px;width:132px;background:#523655"></div>
<div class="h z" style="left:121px">00</div>
<div class="h z" style="left:153px">00</div>
<div class="h" style="left:185px">05</div>
<div class="h" style="left:217px">E0</div>
<div class="h" style="left:249px">50</div>
<div class="h" style="left:281px">61</div>
<div class="h" style="left:313px">67</div>
<div class="h" style="left:345px">65</div>
<div class="h" style="left:388px">54</div>
<div class="h" style="left:420px">61</div>
<div class="h" style="left:452px">62</div>
<div class="h" style="left:484px">6C</div>
<div class="h" style="left:516px">65</div>
<div class="h" style="left:548px">44</div>
<div class="h" style="left:580px">73</div>
<div class="h" style="left:612px">74</div>
<div class="as"><span class="d">.</span><span class="d">.</span><span class="d">.</span><span class="d">.</span>PageTableDst</div>
</div>
<div class="r" style="top:672px">
<div class="t" style="left:8px;top:2px">00058590:</div>
<div class="bg" style="left:121px;width:267px;background:#523655"></div>
<div class="bg" style="left:388px;width:128px;background:#48472c"></div>
<div class="bg" style="left:516px;width:128px;background:#1f4552"></div>
<div class="bg" style="left:655px;width:88px;background:#523655"></div>
<div class="bg" style="left:743px;width:44px;background:#48472c"></div>
<div class="bg" style="left:787px;width:44px;background:#1f4552"></div>
<div class="h" style="left:121px">53</div>
<div class="h" style="left:153px">69</div>
<div class="h" style="left:185px">7A</div>
<div class="h" style="left:217px">65</div>
<div class="h z" style="left:249px">00</div>
<div class="h z" style="left:281px">00</div>
<div class="h z" style="left:313px">00</div>
<div class="h z" style="left:345px">00</div>
<div class="h z" style="left:388px">00</div>
<div class="h" style="left:420px">84</div>
<div class="h z" style="left:452px">00</div>
<div class="h z" style="left:484px">00</div>
<div class="h" style="left:516px">4B</div>
<div class="h" style="left:548px">65</div>
<div class="h" style="left:580px">72</div>
<div class="h" style="left:612px">6E</div>
<div class="as">Size<span class="d">.</span><span class="d">.</span><span class="d">.</span><span class="d">.</span><span class="d">.</span><span class="d">.</span><span class="d">.</span><span class="d">.</span>Kern</div>
</div>
<div class="r" style="top:696px">
<div class="t" style="left:8px;top:2px">000585A0:</div>
<div class="bg" style="left:121px;width:523px;background:#1f4552"></div>
<div class="bg" style="left:655px;width:176px;background:#1f4552"></div>
<div class="h" style="left:121px">65</div>
<div class="h" style="left:153px">6C</div>
<div class="h" style="left:185px">52</div>
<div class="h" style="left:217px">6F</div>
<div class="h" style="left:249px">53</div>
<div class="h" style="left:281px">72</div>
<div class="h" style="left:313px">63</div>
<div class="h" style="left:345px">41</div>
<div class="h" style="left:388px">64</div>
<div class="h" style="left:420px">72</div>
<div class="h z" style="left:452px">00</div>
<div class="h z" style="left:484px">00</div>
<div class="h z" style="left:516px">00</div>
<div class="h z" style="left:548px">00</div>
<div class="h z" style="left:580px">00</div>
<div class="h z" style="left:612px">00</div>
<div class="as">elRoSrcAdr<span class="d">.</span><span class="d">.</span><span class="d">.</span><span class="d">.</span><span class="d">.</span><span class="d">.</span></div>
</div>
<div class="r" style="top:720px">
<div class="t" style="left:8px;top:2px">000585B0:</div>
<div class="bg" style="left:121px;width:128px;background:#23344f"></div>
<div class="bg" style="left:249px;width:395px;background:#553828"></div>
<div class="bg" style="left:655px;width:44px;background:#23344f"></div>
<div class="bg" style="left:699px;width:132px;background:#553828"></div>
<div class="h" style="left:121px">2C</div>
<div class="h" style="left:153px">88</div>
<div class="h" style="left:185px">05</div>
<div class="h" style="left:217px">E0</div>
<div class="h" style="left:249px">4B</div>
<div class="h" style="left:281px">65</div>
<div class="h" style="left:313px">72</div>
<div class="h" style="left:345px">6E</div>
<div class="h" style="left:388px">65</div>
<div class="h" style="left:420px">6C</div>
<div class="h" style="left:452px">52</div>
<div class="h" style="left:484px">6F</div>
<div class="h" style="left:516px">44</div>
<div class="h" style="left:548px">73</div>
<div class="h" style="left:580px">74</div>
<div class="h" style="left:612px">41</div>
<div class="as">,<span class="d">.</span><span class="d">.</span><span class="d">.</span>KernelRoDstA</div>
</div>
<div class="r" style="top:744px">
<div class="t" style="left:8px;top:2px">000585C0:</div>
<div class="bg" style="left:121px;width:267px;background:#553828"></div>
<div class="bg" style="left:388px;width:128px;background:#24402f"></div>
<div class="bg" style="left:516px;width:128px;background:#4a222c"></div>
<div class="bg" style="left:655px;width:88px;background:#553828"></div>
<div class="bg" style="left:743px;width:44px;background:#24402f"></div>
<div class="bg" style="left:787px;width:44px;background:#4a222c"></div>
<div class="h" style="left:121px">64</div>
<div class="h" style="left:153px">72</div>
<div class="h z" style="left:185px">00</div>
<div class="h z" style="left:217px">00</div>
<div class="h z" style="left:249px">00</div>
<div class="h z" style="left:281px">00</div>
<div class="h z" style="left:313px">00</div>
<div class="h z" style="left:345px">00</div>
<div class="h z" style="left:388px">00</div>
<div class="h" style="left:420px">90</div>
<div class="h" style="left:452px">41</div>
<div class="h" style="left:484px">40</div>
<div class="h" style="left:516px">4B</div>
<div class="h" style="left:548px">65</div>
<div class="h" style="left:580px">72</div>
<div class="h" style="left:612px">6E</div>
<div class="as">dr<span class="d">.</span><span class="d">.</span><span class="d">.</span><span class="d">.</span><span class="d">.</span><span class="d">.</span><span class="d">.</span><span class="d">.</span>A@Kern</div>
</div>
<div class="r" style="top:768px">
<div class="t" style="left:8px;top:2px">000585D0:</div>
<div class="bg" style="left:121px;width:523px;background:#4a222c"></div>
<div class="bg" style="left:655px;width:176px;background:#4a222c"></div>
<div class="h" style="left:121px">65</div>
<div class="h" style="left:153px">6C</div>
<div class="h" style="left:185px">52</div>
<div class="h" style="left:217px">6F</div>
<div class="h" style="left:249px">44</div>
<div class="h" style="left:281px">73</div>
<div class="h" style="left:313px">74</div>
<div class="h" style="left:345px">53</div>
<div class="h" style="left:388px">69</div>
<div class="h" style="left:420px">7A</div>
<div class="h" style="left:452px">65</div>
<div class="h z" style="left:484px">00</div>
<div class="h z" style="left:516px">00</div>
<div class="h z" style="left:548px">00</div>
<div class="h z" style="left:580px">00</div>
<div class="h z" style="left:612px">00</div>
<div class="as">elRoDstSize<span class="d">.</span><span class="d">.</span><span class="d">.</span><span class="d">.</span><span class="d">.</span></div>
</div>
<div class="r" style="top:792px">
<div class="t" style="left:8px;top:2px">000585E0:</div>
<div class="bg" style="left:121px;width:128px;background:#3b2f55"></div>
<div class="bg" style="left:249px;width:395px;background:#3a2d33"></div>
<div class="bg" style="left:655px;width:44px;background:#3b2f55"></div>
<div class="bg" style="left:699px;width:132px;background:#3a2d33"></div>
<div class="h" style="left:121px">8C</div>
<div class="h" style="left:153px">2A</div>
<div class="h" style="left:185px">02</div>
<div class="h z" style="left:217px">00</div>
<div class="h" style="left:249px">5A</div>
<div class="h" style="left:281px">6C</div>
<div class="h" style="left:313px">69</div>
<div class="h" style="left:345px">62</div>
<div class="h" style="left:388px">52</div>
<div class="h" style="left:420px">77</div>
<div class="h" style="left:452px">5A</div>
<div class="h" style="left:484px">69</div>
<div class="h" style="left:516px">44</div>
<div class="h" style="left:548px">73</div>
<div class="h" style="left:580px">74</div>
<div class="h z" style="left:612px">00</div>
<div class="as"><span class="d">.</span>*<span class="d">.</span><span class="d">.</span>ZlibRwZiDst<span class="d">.</span></div>
</div>
<div class="r" style="top:816px">
<div class="t" style="left:8px;top:2px">000585F0:</div>
<div class="bg" style="left:121px;width:267px;background:#3a2d33"></div>
<div class="bg" style="left:388px;width:128px;background:#523655"></div>
<div class="bg" style="left:516px;width:128px;background:#48472c"></div>
<div class="bg" style="left:655px;width:88px;background:#3a2d33"></div>
<div class="bg" style="left:743px;width:44px;background:#523655"></div>
<div class="bg" style="left:787px;width:44px;background:#48472c"></div>
<div class="h z" style="left:121px">00</div>
<div class="h z" style="left:153px">00</div>
<div class="h z" style="left:185px">00</div>
<div class="h z" style="left:217px">00</div>
<div class="h z" style="left:249px">00</div>
<div class="h z" style="left:281px">00</div>
<div class="h z" style="left:313px">00</div>
<div class="h z" style="left:345px">00</div>
<div class="h" style="left:388px">BC</div>
<div class="h" style="left:420px">4F</div>
<div class="h" style="left:452px">39</div>
<div class="h" style="left:484px">41</div>
<div class="h" style="left:516px">5A</div>
<div class="h" style="left:548px">6C</div>
<div class="h" style="left:580px">69</div>
<div class="h" style="left:612px">62</div>
<div class="as"><span class="d">.</span><span class="d">.</span><span class="d">.</span><span class="d">.</span><span class="d">.</span><span class="d">.</span><span class="d">.</span><span class="d">.</span><span class="d">.</span>O9AZlib</div>
</div>
<div class="r" style="top:840px">
<div class="t" style="left:8px;top:2px">00058600:</div>
<div class="bg" style="left:121px;width:523px;background:#48472c"></div>
<div class="bg" style="left:655px;width:176px;background:#48472c"></div>
<div class="h" style="left:121px">52</div>
<div class="h" style="left:153px">57</div>
<div class="h" style="left:185px">5A</div>
<div class="h" style="left:217px">69</div>
<div class="h" style="left:249px">53</div>
<div class="h" style="left:281px">69</div>
<div class="h" style="left:313px">7A</div>
<div class="h" style="left:345px">65</div>
<div class="h z" style="left:388px">00</div>
<div class="h z" style="left:420px">00</div>
<div class="h z" style="left:452px">00</div>
<div class="h z" style="left:484px">00</div>
<div class="h z" style="left:516px">00</div>
<div class="h z" style="left:548px">00</div>
<div class="h z" style="left:580px">00</div>
<div class="h z" style="left:612px">00</div>
<div class="as">RWZiSize<span class="d">.</span><span class="d">.</span><span class="d">.</span><span class="d">.</span><span class="d">.</span><span class="d">.</span><span class="d">.</span><span class="d">.</span></div>
</div>
<div class="r" style="top:864px">
<div class="t" style="left:8px;top:2px">00058610:</div>
<div class="bg" style="left:121px;width:128px;background:#1f4552"></div>
<div class="bg" style="left:249px;width:395px;background:#23344f"></div>
<div class="bg" style="left:655px;width:44px;background:#1f4552"></div>
<div class="bg" style="left:699px;width:132px;background:#23344f"></div>
<div class="h z" style="left:121px">00</div>
<div class="h z" style="left:153px">00</div>
<div class="h z" style="left:185px">00</div>
<div class="h z" style="left:217px">00</div>
<div class="h" style="left:249px">5A</div>
<div class="h" style="left:281px">6C</div>
<div class="h" style="left:313px">69</div>
<div class="h" style="left:345px">62</div>
<div class="h" style="left:388px">32</div>
<div class="h" style="left:420px">52</div>
<div class="h" style="left:452px">77</div>
<div class="h" style="left:484px">53</div>
<div class="h" style="left:516px">72</div>
<div class="h" style="left:548px">63</div>
<div class="h" style="left:580px">41</div>
<div class="h" style="left:612px">64</div>
<div class="as"><span class="d">.</span><span class="d">.</span><span class="d">.</span><span class="d">.</span>Zlib2RwSrcAd</div>
</div>
<div class="r" style="top:888px">
<div class="t" style="left:8px;top:2px">00058620:</div>
<div class="bg" style="left:121px;width:267px;background:#23344f"></div>
<div class="bg" style="left:388px;width:128px;background:#553828"></div>
<div class="bg" style="left:516px;width:128px;background:#24402f"></div>
<div class="bg" style="left:655px;width:88px;background:#23344f"></div>
<div class="bg" style="left:743px;width:44px;background:#553828"></div>
<div class="bg" style="left:787px;width:44px;background:#24402f"></div>
<div class="h" style="left:121px">72</div>
<div class="h z" style="left:153px">00</div>
<div class="h z" style="left:185px">00</div>
<div class="h z" style="left:217px">00</div>
<div class="h z" style="left:249px">00</div>
<div class="h z" style="left:281px">00</div>
<div class="h z" style="left:313px">00</div>
<div class="h z" style="left:345px">00</div>
<div class="h" style="left:388px">C0</div>
<div class="h" style="left:420px">3B</div>
<div class="h" style="left:452px">FD</div>
<div class="h" style="left:484px">E0</div>
<div class="h" style="left:516px">5A</div>
<div class="h" style="left:548px">6C</div>
<div class="h" style="left:580px">69</div>
<div class="h" style="left:612px">62</div>
<div class="as">r<span class="d">.</span><span class="d">.</span><span class="d">.</span><span class="d">.</span><span class="d">.</span><span class="d">.</span><span class="d">.</span><span class="d">.</span>;<span class="d">.</span><span class="d">.</span>Zlib</div>
</div>
<div class="r" style="top:912px">
<div class="t" style="left:8px;top:2px">00058630:</div>
<div class="bg" style="left:121px;width:523px;background:#24402f"></div>
<div class="bg" style="left:655px;width:176px;background:#24402f"></div>
<div class="h" style="left:121px">32</div>
<div class="h" style="left:153px">52</div>
<div class="h" style="left:185px">77</div>
<div class="h" style="left:217px">44</div>
<div class="h" style="left:249px">73</div>
<div class="h" style="left:281px">74</div>
<div class="h" style="left:313px">41</div>
<div class="h" style="left:345px">64</div>
<div class="h" style="left:388px">72</div>
<div class="h z" style="left:420px">00</div>
<div class="h z" style="left:452px">00</div>
<div class="h z" style="left:484px">00</div>
<div class="h z" style="left:516px">00</div>
<div class="h z" style="left:548px">00</div>
<div class="h z" style="left:580px">00</div>
<div class="h z" style="left:612px">00</div>
<div class="as">2RwDstAdr<span class="d">.</span><span class="d">.</span><span class="d">.</span><span class="d">.</span><span class="d">.</span><span class="d">.</span><span class="d">.</span></div>
</div>
<div class="r" style="top:936px">
<div class="t" style="left:8px;top:2px">00058640:</div>
<div class="bg" style="left:121px;width:128px;background:#4a222c"></div>
<div class="bg" style="left:249px;width:395px;background:#3b2f55"></div>
<div class="bg" style="left:655px;width:44px;background:#4a222c"></div>
<div class="bg" style="left:699px;width:132px;background:#3b2f55"></div>
<div class="h z" style="left:121px">00</div>
<div class="h" style="left:153px">D0</div>
<div class="h" style="left:185px">C5</div>
<div class="h" style="left:217px">41</div>
<div class="h" style="left:249px">5A</div>
<div class="h" style="left:281px">6C</div>
<div class="h" style="left:313px">69</div>
<div class="h" style="left:345px">62</div>
<div class="h" style="left:388px">32</div>
<div class="h" style="left:420px">52</div>
<div class="h" style="left:452px">77</div>
<div class="h" style="left:484px">44</div>
<div class="h" style="left:516px">73</div>
<div class="h" style="left:548px">74</div>
<div class="h" style="left:580px">53</div>
<div class="h" style="left:612px">69</div>
<div class="as"><span class="d">.</span><span class="d">.</span><span class="d">.</span>AZlib2RwDstSi</div>
</div>
<div class="r" style="top:960px">
<div class="t" style="left:8px;top:2px">00058650:</div>
<div class="bg" style="left:121px;width:267px;background:#3b2f55"></div>
<div class="bg" style="left:388px;width:128px;background:#3a2d33"></div>
<div class="bg" style="left:516px;width:128px;background:#523655"></div>
<div class="bg" style="left:655px;width:88px;background:#3b2f55"></div>
<div class="bg" style="left:743px;width:44px;background:#3a2d33"></div>
<div class="bg" style="left:787px;width:44px;background:#523655"></div>
<div class="h" style="left:121px">7A</div>
<div class="h" style="left:153px">65</div>
<div class="h z" style="left:185px">00</div>
<div class="h z" style="left:217px">00</div>
<div class="h z" style="left:249px">00</div>
<div class="h z" style="left:281px">00</div>
<div class="h z" style="left:313px">00</div>
<div class="h z" style="left:345px">00</div>
<div class="h" style="left:388px">0C</div>
<div class="h" style="left:420px">D9</div>
<div class="h" style="left:452px">0A</div>
<div class="h z" style="left:484px">00</div>
<div class="h" style="left:516px">5A</div>
<div class="h" style="left:548px">6C</div>
<div class="h" style="left:580px">69</div>
<div class="h" style="left:612px">62</div>
<div class="as">ze<span class="d">.</span><span class="d">.</span><span class="d">.</span><span class="d">.</span><span class="d">.</span><span class="d">.</span><span class="d">.</span><span class="d">.</span><span class="d">.</span><span class="d">.</span>Zlib</div>
</div>
<div class="r" style="top:984px">
<div class="t" style="left:8px;top:2px">00058660:</div>
<div class="bg" style="left:121px;width:523px;background:#523655"></div>
<div class="bg" style="left:655px;width:176px;background:#523655"></div>
<div class="h" style="left:121px">32</div>
<div class="h" style="left:153px">52</div>
<div class="h" style="left:185px">77</div>
<div class="h" style="left:217px">5A</div>
<div class="h" style="left:249px">69</div>
<div class="h" style="left:281px">44</div>
<div class="h" style="left:313px">73</div>
<div class="h" style="left:345px">74</div>
<div class="h z" style="left:388px">00</div>
<div class="h z" style="left:420px">00</div>
<div class="h z" style="left:452px">00</div>
<div class="h z" style="left:484px">00</div>
<div class="h z" style="left:516px">00</div>
<div class="h z" style="left:548px">00</div>
<div class="h z" style="left:580px">00</div>
<div class="h z" style="left:612px">00</div>
<div class="as">2RwZiDst<span class="d">.</span><span class="d">.</span><span class="d">.</span><span class="d">.</span><span class="d">.</span><span class="d">.</span><span class="d">.</span><span class="d">.</span></div>
</div>
<div class="r" style="top:1008px">
<div class="t" style="left:8px;top:2px">00058670:</div>
<div class="bg" style="left:121px;width:128px;background:#48472c"></div>
<div class="bg" style="left:249px;width:395px;background:#1f4552"></div>
<div class="bg" style="left:655px;width:44px;background:#48472c"></div>
<div class="bg" style="left:699px;width:132px;background:#1f4552"></div>
<div class="h" style="left:121px">0C</div>
<div class="h" style="left:153px">A9</div>
<div class="h" style="left:185px">D0</div>
<div class="h" style="left:217px">41</div>
<div class="h" style="left:249px">5A</div>
<div class="h" style="left:281px">6C</div>
<div class="h" style="left:313px">69</div>
<div class="h" style="left:345px">62</div>
<div class="h" style="left:388px">32</div>
<div class="h" style="left:420px">52</div>
<div class="h" style="left:452px">57</div>
<div class="h" style="left:484px">5A</div>
<div class="h" style="left:516px">69</div>
<div class="h" style="left:548px">53</div>
<div class="h" style="left:580px">69</div>
<div class="h" style="left:612px">7A</div>
<div class="as"><span class="d">.</span><span class="d">.</span><span class="d">.</span>AZlib2RWZiSiz</div>
</div>
<div class="r" style="top:1032px">
<div class="t" style="left:8px;top:2px">00058680:</div>
<div class="bg" style="left:121px;width:267px;background:#1f4552"></div>
<div class="bg" style="left:388px;width:128px;background:#23344f"></div>
<div class="bg" style="left:516px;width:128px;background:#553828"></div>
<div class="bg" style="left:655px;width:88px;background:#1f4552"></div>
<div class="bg" style="left:743px;width:44px;background:#23344f"></div>
<div class="bg" style="left:787px;width:44px;background:#553828"></div>
<div class="h" style="left:121px">65</div>
<div class="h z" style="left:153px">00</div>
<div class="h z" style="left:185px">00</div>
<div class="h z" style="left:217px">00</div>
<div class="h z" style="left:249px">00</div>
<div class="h z" style="left:281px">00</div>
<div class="h z" style="left:313px">00</div>
<div class="h z" style="left:345px">00</div>
<div class="h z" style="left:388px">00</div>
<div class="h z" style="left:420px">00</div>
<div class="h z" style="left:452px">00</div>
<div class="h z" style="left:484px">00</div>
<div class="h" style="left:516px">4D</div>
<div class="h" style="left:548px">61</div>
<div class="h" style="left:580px">69</div>
<div class="h" style="left:612px">6E</div>
<div class="as">e<span class="d">.</span><span class="d">.</span><span class="d">.</span><span class="d">.</span><span class="d">.</span><span class="d">.</span><span class="d">.</span><span class="d">.</span><span class="d">.</span><span class="d">.</span><span class="d">.</span>Main</div>
</div>
<div class="r" style="top:1056px">
<div class="t" style="left:8px;top:2px">00058690:</div>
<div class="bg" style="left:121px;width:523px;background:#553828"></div>
<div class="bg" style="left:655px;width:176px;background:#553828"></div>
<div class="h" style="left:121px">50</div>
<div class="h" style="left:153px">72</div>
<div class="h" style="left:185px">67</div>
<div class="h" style="left:217px">5A</div>
<div class="h" style="left:249px">6C</div>
<div class="h" style="left:281px">69</div>
<div class="h" style="left:313px">62</div>
<div class="h z" style="left:345px">00</div>
<div class="h z" style="left:388px">00</div>
<div class="h z" style="left:420px">00</div>
<div class="h z" style="left:452px">00</div>
<div class="h z" style="left:484px">00</div>
<div class="h z" style="left:516px">00</div>
<div class="h z" style="left:548px">00</div>
<div class="h z" style="left:580px">00</div>
<div class="h z" style="left:612px">00</div>
<div class="as">PrgZlib<span class="d">.</span><span class="d">.</span><span class="d">.</span><span class="d">.</span><span class="d">.</span><span class="d">.</span><span class="d">.</span><span class="d">.</span><span class="d">.</span></div>
</div>
<div class="r" style="top:1080px">
<div class="t" style="left:8px;top:2px">000586A0:</div>
<div class="bg" style="left:121px;width:128px;background:#24402f"></div>
<div class="bg" style="left:249px;width:395px;background:#4a222c"></div>
<div class="bg" style="left:655px;width:44px;background:#24402f"></div>
<div class="bg" style="left:699px;width:132px;background:#4a222c"></div>
<div class="h" style="left:121px">01</div>
<div class="h z" style="left:153px">00</div>
<div class="h z" style="left:185px">00</div>
<div class="h z" style="left:217px">00</div>
<div class="h" style="left:249px">4D</div>
<div class="h" style="left:281px">61</div>
<div class="h" style="left:313px">69</div>
<div class="h" style="left:345px">6E</div>
<div class="h" style="left:388px">44</div>
<div class="h" style="left:420px">61</div>
<div class="h" style="left:452px">74</div>
<div class="h" style="left:484px">61</div>
<div class="h" style="left:516px">41</div>
<div class="h" style="left:548px">64</div>
<div class="h" style="left:580px">64</div>
<div class="h" style="left:612px">65</div>
<div class="as"><span class="d">.</span><span class="d">.</span><span class="d">.</span><span class="d">.</span>MainDataAdde</div>
</div>
<div class="r" style="top:1104px">
<div class="t" style="left:8px;top:2px">000586B0:</div>
<div class="bg" style="left:121px;width:267px;background:#4a222c"></div>
<div class="bg" style="left:388px;width:128px;background:#3b2f55"></div>
<div class="bg" style="left:516px;width:128px;background:#3a2d33"></div>
<div class="bg" style="left:655px;width:88px;background:#4a222c"></div>
<div class="bg" style="left:743px;width:44px;background:#3b2f55"></div>
<div class="bg" style="left:787px;width:44px;background:#3a2d33"></div>
<div class="h" style="left:121px">73</div>
<div class="h" style="left:153px">73</div>
<div class="h z" style="left:185px">00</div>
<div class="h z" style="left:217px">00</div>
<div class="h z" style="left:249px">00</div>
<div class="h z" style="left:281px">00</div>
<div class="h z" style="left:313px">00</div>
<div class="h z" style="left:345px">00</div>
<div class="h z" style="left:388px">00</div>
<div class="h z" style="left:420px">00</div>
<div class="h" style="left:452px">B7</div>
<div class="h" style="left:484px">E0</div>
<div class="h" style="left:516px">4D</div>
<div class="h" style="left:548px">61</div>
<div class="h" style="left:580px">69</div>
<div class="h" style="left:612px">6E</div>
<div class="as">ss<span class="d">.</span><span class="d">.</span><span class="d">.</span><span class="d">.</span><span class="d">.</span><span class="d">.</span><span class="d">.</span><span class="d">.</span><span class="d">.</span><span class="d">.</span>Main</div>
</div>
<svg class="a" style="left:0;top:0" width="935" height="1114"></svg>
</div>
<svg class="a" style="left:0;top:153px" width="935" height="1114" viewBox="0 153 935 1114">
<path d="M121.6 1272 V249.6 H249.7 V226 H643.2 V1272" fill="none" stroke="#f4f4f4" stroke-width="1.4"/>
<path d="M655.6 1272 V249.6 H699.5 V226 H831.2 V1272" fill="none" stroke="#f4f4f4" stroke-width="1.4"/>
</svg>
<div class="a" style="left:913px;top:111px;width:21px;height:1157px;background:#0b0b0b"></div>
<div class="a" style="left:916px;top:138px;width:15px;height:18px;background:#5a5a5a;border-radius:7px"></div>
<div class="a" style="left:8px;top:1274px;width:926px;height:40px;border:1px solid #45454f;background:#111"></div>
<div class="a" style="left:23px;top:1289px;width:36px;height:20px;border:1px solid #1f6fd0"></div>
<div class="a" style="left:71px;top:1289px;width:36px;height:20px;border:1px solid #1f6fd0"></div>
<div class="a" style="left:119px;top:1289px;width:36px;height:20px;border:1px solid #1f6fd0"></div>
<div class="a" style="left:157px;top:1289px;width:35px;height:20px;border:1px solid #1d3f66"></div>
<div class="a" style="left:195px;top:1289px;width:34px;height:20px;border:1px solid #333338"></div>
<div class="a" style="left:231px;top:1289px;width:36px;height:20px;border:1px solid #333338"></div>
<div class="a" style="left:456px;top:1289px;width:35px;height:20px;border:1px solid #333338"></div>
<div class="a" style="left:457px;top:1290px;width:34px;height:10px;background:#191919"></div>
<svg class="a" style="left:0;top:1280px" width="520" height="16"><path d="M473.5 13 L477 16.5 L470 16.5z" fill="#d8d8d8"/><ellipse cx="89" cy="16" rx="4.5" ry="3" fill="#e0e0e0"/><path d="M168 16 Q170 12 176 12.5 L176 16z" fill="#555"/><rect x="240" y="14" width="18" height="2" fill="#8a8a8a"/><circle cx="212" cy="16" r="1.2" fill="#777"/></svg>
<div class="a" style="left:946px;top:66px;width:3px;height:1230px;background:#3b3b43"></div>
<div class="a" style="left:949px;top:66px;width:180px;height:32px;background:#232323"></div>
<div class="a" style="left:955px;top:67px;width:200px;height:32px;background:#22426b;border-radius:6px 0 0 0"></div>
<div class="t" style="left:961px;top:72px;color:#f0f0f0">Data Inspector</div>
<div class="a" style="left:961px;top:99px;width:168px;height:21px;background:#1e1e1e;overflow:hidden"><div class="t" style="left:7px;top:-7px;line-height:30px">uint8_t</div></div>
<div class="di" style="top:120px;background:#111111"></div>
<div class="dt" style="top:120px">int8_t</div>
<div class="di" style="top:150px;background:#1e1e1e"></div>
<div class="dt" style="top:150px">uint16_t</div>
<div class="di" style="top:180px;background:#111111"></div>
<div class="dt" style="top:180px">int16_t</div>
<div class="di" style="top:210px;background:#1e1e1e"></div>
<div class="dt" style="top:210px">uint24_t</div>
<div class="di" style="top:240px;background:#111111"></div>
<div class="dt" style="top:240px">int24_t</div>
<div class="di" style="top:270px;background:#1e1e1e"></div>
<div class="dt" style="top:270px">uint32_t</div>
<div class="di" style="top:300px;background:#111111"></div>
<div class="dt" style="top:300px">int32_t</div>
<div class="di" style="top:330px;background:#1e1e1e"></div>
<div class="dt" style="top:330px">uint48_t</div>
<div class="di" style="top:360px;background:#111111"></div>
<div class="dt" style="top:360px">int48_t</div>
<div class="di" style="top:390px;background:#1e1e1e"></div>
<div class="dt" style="top:390px">uint64_t</div>
<div class="di" style="top:420px;background:#111111"></div>
<div class="dt" style="top:420px">int64_t</div>
<div class="di" style="top:450px;background:#1e1e1e"></div>
<div class="dt" style="top:450px">half float (16 bit)</div>
<div class="di" style="top:480px;background:#111111"></div>
<div class="dt" style="top:480px">float (32 bit)</div>
<div class="di" style="top:510px;background:#1e1e1e"></div>
<div class="dt" style="top:510px">double (64 bit)</div>
<div class="di" style="top:540px;background:#111111"></div>
<div class="dt" style="top:540px">long double (128 bit)</div>
<div class="di" style="top:570px;background:#1e1e1e"></div>
<div class="dt" style="top:570px">Signed LEB128</div>
<div class="di" style="top:600px;background:#111111"></div>
<div class="dt" style="top:600px">Unsigned LEB128</div>
<div class="di" style="top:630px;background:#1e1e1e"></div>
<div class="dt" style="top:630px">bool</div>
<div class="di" style="top:660px;background:#111111"></div>
<div class="dt" style="top:660px">ASCII Character</div>
<div class="di" style="top:690px;background:#1e1e1e"></div>
<div class="dt" style="top:690px">wchar_t</div>
<div class="di" style="top:720px;background:#111111"></div>
<div class="dt" style="top:720px">char16_t</div>
<div class="di" style="top:750px;background:#1e1e1e"></div>
<div class="dt" style="top:750px">char32_t</div>
<div class="di" style="top:780px;background:#111111"></div>
<div class="dt" style="top:780px">UTF-8 code point</div>
<div class="di" style="top:810px;background:#1e1e1e"></div>
<div class="dt" style="top:810px">String</div>
<div class="di" style="top:840px;background:#111111"></div>
<div class="dt" style="top:840px">Wide String</div>
<div class="di" style="top:870px;background:#1e1e1e"></div>
<div class="dt" style="top:870px">String16</div>
<div class="di" style="top:900px;background:#111111"></div>
<div class="dt" style="top:900px">String32</div>
<div class="di" style="top:930px;background:#1e1e1e"></div>
<div class="dt" style="top:930px">time32_t</div>
<div class="di" style="top:960px;background:#111111"></div>
<div class="dt" style="top:960px">time64_t</div>
<div class="di" style="top:990px;background:#1e1e1e"></div>
<div class="dt" style="top:990px">DOS Date</div>
<div class="di" style="top:1020px;background:#111111"></div>
<div class="dt" style="top:1020px">DOS Time</div>
<div class="di" style="top:1050px;background:#1e1e1e"></div>
<div class="dt" style="top:1050px">GUID</div>
<div class="di" style="top:1080px;background:#111111"></div>
<div class="dt" style="top:1080px">RGBA8 Color</div>
<div class="di" style="top:1110px;background:#1e1e1e"></div>
<div class="dt" style="top:1110px">RGB565 Color</div>
<div class="a" style="left:961px;top:1139px;width:168px;height:1px;background:#3a3a40"></div>
<div class="a" style="left:961px;top:98px;width:1px;height:1042px;background:#3a3a40"></div>
<div class="a" style="left:961px;top:1146px;width:200px;height:33px;border:1px solid #3a3a40;background:#111"></div>
<div class="t" style="left:1099px;top:1152px">Edit</div>
<div class="a" style="left:961px;top:1215px;width:168px;height:1px;background:#3a3a40"></div>
<div class="a" style="left:961px;top:1251px;width:200px;height:33px;border:1px solid #3a3a40;border-bottom:none;background:#222;border-radius:6px 0 0 0"></div>
<div class="t" style="left:973px;top:1257px">Settings</div>
<div class="a" style="left:961px;top:1284px;width:1px;height:12px;background:#3a3a40"></div>
</div></body></html>
